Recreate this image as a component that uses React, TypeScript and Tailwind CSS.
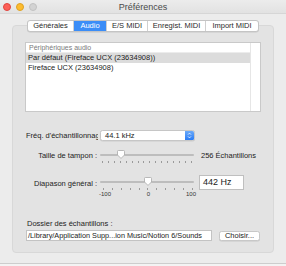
import React from 'react'

const tabs = [
	{label: 'Générales', w: 'w-[45px]'},
	{label: 'Audio', w: 'w-[33px]', active: true},
	{label: 'E/S MIDI', w: 'w-[41px]'},
	{label: 'Enregist. MIDI', w: 'w-[58px]'},
	{label: 'Import MIDI', w: 'w-[53px]'},
]

const Thumb = () => (
	<svg width="8" height="9" viewBox="0 0 8 9">
		<path
			d="M1.4 0.5h5.2a0.9 0.9 0 0 1 0.9 0.9v3.6l-3.5 3.4l-3.5-3.4v-3.6a0.9 0.9 0 0 1 0.9-0.9z"
			fill="#ffffff"
			stroke="#a9a9a9"
			strokeWidth="0.8"
		/>
	</svg>
)

const Slider = ({ticks, left, pad}: {ticks: number; left: string; pad: string}) => (
	<div className="relative w-[94px] h-[15px]">
		<div className="absolute left-0 right-0 top-[4px] h-[2px] rounded-full bg-[#bdbdbd]" />
		<div className={`absolute top-0 ${left}`}>
			<Thumb />
		</div>
		<div className={`absolute left-0 right-0 top-[11px] flex justify-between ${pad}`}>
			{Array.from({length: ticks}).map((_, i) => (
				<div key={i} className="w-[1px] h-[2px] bg-[#9a9a9a]" />
			))}
		</div>
	</div>
)

const App = () => {
	return (
		<div className="w-[286px] h-[266px] bg-[#f3f3f3] font-['Liberation_Sans',Arial,sans-serif] text-[#222] overflow-hidden">
			<div className="h-[264px] bg-[#ececec] border-b border-[#cdcdcd] flex flex-col">
				{/* title bar */}
				<div className="h-[14px] border-b border-[#d6d6d6] bg-gradient-to-b from-[#ececec] to-[#e2e2e2] grid grid-cols-[1fr_auto_1fr] items-center">
					<div className="flex items-center gap-[5px] pl-[3px]">
						<span className="w-[8px] h-[8px] rounded-full bg-[#fc5f57] border border-[#e0443e]" />
						<span className="w-[8px] h-[8px] rounded-full bg-[#fdbc2e] border border-[#dea123]" />
						<span className="w-[8px] h-[8px] rounded-full bg-[#d3d3d3] border border-[#c2c2c2]" />
					</div>
					<div className="text-[9px] leading-[12px] text-[#4a4a4a]">Préférences</div>
					<div />
				</div>

				{/* tabs */}
				<div className="mt-[6px] flex justify-center relative z-10">
					<div className="flex h-[12px] rounded-[3px] border border-[#c4c4c4] bg-white shadow-[0_0.5px_0.5px_rgba(0,0,0,0.12)] overflow-hidden">
						{tabs.map((t, i) => (
							<div
								key={t.label}
								className={`${t.w} flex items-center justify-center text-[7.5px] leading-[10px] ${
									t.active ? 'bg-[#3b8df7] text-white' : 'text-[#2a2a2a]'
								} ${i > 0 ? 'border-l border-[#d0d0d0]' : ''}`}
							>
								{t.label}
							</div>
						))}
					</div>
				</div>

				{/* panel */}
				<div className="-mt-[7px] mx-[12px] h-[228px] rounded-[4px] border border-[#d8d8d8] bg-[#e3e3e3] flex flex-col">
					{/* device list */}
					<div className="mt-[16px] mx-[12px] h-[70px] bg-white border border-[#c9c9c9] flex">
						<div className="flex-1 flex flex-col">
							<div className="h-[10px] border-b border-[#ececec] pl-[3px] text-[7px] leading-[9px] text-[#7a7a7a]">
								Périphériques audio
							</div>
							<div className="h-[10px] bg-[#dcdcdc] pl-[2px] text-[7.5px] leading-[10px]">
								Par défaut (Fireface UCX (23634908))
							</div>
							<div className="h-[10px] pl-[2px] text-[7.5px] leading-[10px]">Fireface UCX (23634908)</div>
						</div>
						<div className="w-[10px] border-l border-[#e6e6e6]" />
					</div>

					{/* sample rate */}
					<div className="mt-[18px] h-[11px] flex">
						<div className="ml-[13px] w-[72px] overflow-hidden whitespace-nowrap text-[7.5px] leading-[11px]">
							Fréq. d'échantillonnage :
						</div>
						<div className="ml-[2px] w-[95px] h-[11px] flex rounded-[2.5px] border border-[#c6c6c6] bg-white shadow-[0_0.5px_0.5px_rgba(0,0,0,0.1)] overflow-hidden">
							<div className="flex-1 pl-[4px] text-[7.5px] leading-[9px]">44.1 kHz</div>
							<div className="w-[9px] bg-gradient-to-b from-[#69a9f9] to-[#2a7cf5] flex items-center justify-center">
								<svg width="5" height="7" viewBox="0 0 5 7">
									<path d="M1 2.6L2.5 1.1L4 2.6M1 4.4L2.5 5.9L4 4.4" fill="none" stroke="#fff" strokeWidth="0.8" />
								</svg>
							</div>
						</div>
					</div>

					{/* buffer size */}
					<div className="mt-[7px] h-[14px] flex">
						<div className="ml-[13px] w-[71px] mt-[1.5px] text-right whitespace-nowrap text-[7.5px] leading-[11px]">
							Taille de tampon :
						</div>
						<div className="ml-[3px] mt-[2px]">
							<Slider ticks={16} left="left-[17px]" pad="pl-[2px] pr-[2px]" />
						</div>
						<div className="ml-[7px] mt-[1.5px] whitespace-nowrap text-[7.5px] leading-[11px]">256 Échantillons</div>
					</div>

					{/* tuning */}
					<div className="mt-[13px] h-[15px] flex">
						<div className="ml-[13px] w-[71px] mt-[3px] text-right whitespace-nowrap text-[7.5px] leading-[11px]">
							Diapason général :
						</div>
						<div className="ml-[3px] mt-[2px]">
							<Slider ticks={11} left="left-[44px]" pad="pl-[3px] pr-[1px]" />
						</div>
						<div className="ml-[5px] w-[45px] h-[15px] bg-white border border-[#bfbfbf] pl-[3px] text-[9px] leading-[13px]">
							442 Hz
						</div>
					</div>
					<div className="h-[8px] ml-[86px] w-[97px] flex justify-between text-[6px] leading-[8px] text-[#333]">
						<span>-100</span>
						<span>0</span>
						<span>100</span>
					</div>

					{/* samples folder */}
					<div className="mt-[20px] h-[11px] ml-[14px] text-[7.5px] leading-[11px]">Dossier des échantillons :</div>
					<div className="mt-[1px] h-[11px] flex items-start">
						<div className="ml-[13px] w-[186px] h-[11px] bg-white border border-[#c3c3c3] pl-[1px] whitespace-nowrap overflow-hidden text-[7.3px] leading-[9px]">
							/Library/Application Supp...ion Music/Notion 6/Sounds
						</div>
						<div className="ml-[7px] mt-[1px] w-[41px] h-[10px] rounded-[2.5px] bg-white border border-[#c8c8c8] shadow-[0_0.5px_0.5px_rgba(0,0,0,0.12)] flex items-center justify-center text-[7.5px] leading-[8px]">
							Choisir...
						</div>
					</div>
				</div>
			</div>
		</div>
	)
}

export default App
